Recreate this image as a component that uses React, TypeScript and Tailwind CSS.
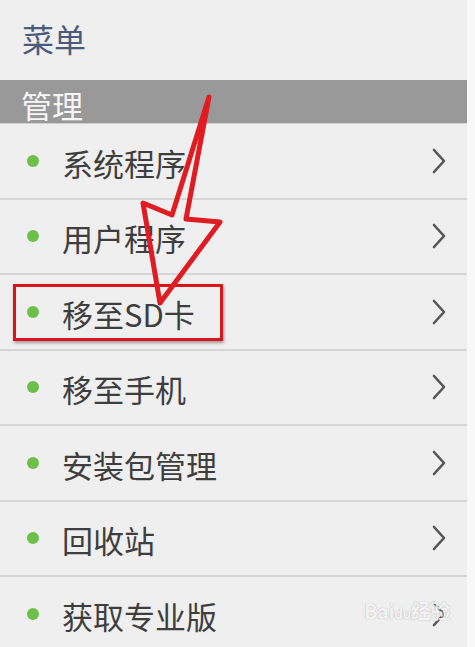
import React from "react";

const items = ["系统程序", "用户程序", "移至SD卡", "移至手机", "安装包管理", "回收站", "获取专业版"];

function Chevron() {
  return (
    <svg width="18" height="28" viewBox="0 0 18 28" className="shrink-0">
      <path d="M4 3 L14 14 L4 25" fill="none" stroke="#555" strokeWidth="2.6" strokeLinecap="round" strokeLinejoin="round" />
    </svg>
  );
}

export default function App() {
  return (
    <div
      className="relative w-[475px] h-[647px] overflow-hidden bg-[#efefef] flex"
      style={{ fontFamily: '"Noto Sans CJK SC", "Noto Sans", sans-serif' }}
    >
      <div className="flex-1 flex flex-col">
        <div className="h-[80px] shrink-0 flex items-center pl-[22px] pb-[4px] text-[32px] text-[#4a5b7c]">
          菜单
        </div>
        <div className="h-[44px] shrink-0 bg-[#999999] flex items-center pl-[21px] pt-[5px] text-[31px] leading-none text-[#f6f6f6] border-b border-[#d0d0d0]">
          管理
        </div>
        {items.map((t) => (
          <div
            key={t}
            className="h-[75.5px] shrink-0 flex items-center border-b-2 border-[#d6d6d6] pl-[27px] pr-[19px]"
          >
            <span className="w-[12px] h-[12px] rounded-full bg-[#6cc04a] shrink-0" />
            <span className="ml-[23px] pt-[3px] text-[31px] text-[#3e3e3e] leading-none flex-1">{t}</span>
            <Chevron />
          </div>
        ))}
      </div>
      <div className="w-[8px] bg-[#f8f8f8]" />

      {/* highlight box */}
      <div className="absolute left-[13px] top-[284px] w-[210px] h-[57px] border-[3px] border-[#d8141c] shadow-[1px_2px_3px_rgba(0,0,0,0.35)]" />

      {/* hand-drawn arrow */}
      <svg className="absolute left-0 top-0 pointer-events-none" width="475" height="647" viewBox="0 0 475 647">
        <polygon
          points="209,97 172,215 143,203 160,303 220,222 186,219"
          fill="none"
          stroke="#e01b22"
          strokeWidth="5"
          strokeLinejoin="round"
          strokeLinecap="round"
        />
      </svg>

      {/* watermark */}
      <div className="absolute left-[364px] top-[596px] text-[20px] font-bold text-[#f4f4f4] opacity-90 tracking-tight [text-shadow:0_0_1px_#999]">
        Bai<span className="text-[14px]">du</span>经验
      </div>
    </div>
  );
}
